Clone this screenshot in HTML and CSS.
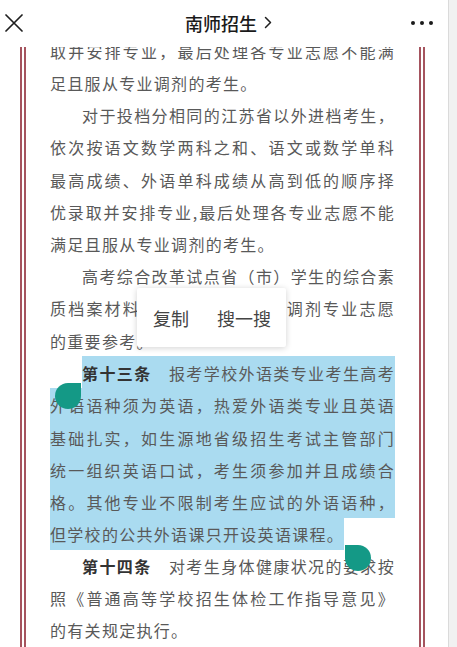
FILE: index.html
```html
<!DOCTYPE html>
<html lang="zh-CN">
<head>
<meta charset="utf-8">
<title>南师招生</title>
<link rel="stylesheet" href="styles.css">
</head>
<body>
<header class="topbar">
  <div class="bar-left">
    <svg class="icon-close" width="18" height="18" viewBox="0 0 18 18"><path d="M1 1L17 17M17 1L1 17" stroke="#1f1f1f" stroke-width="1.7" fill="none" stroke-linecap="round"/></svg>
  </div>
  <div class="bar-title"><span>南师招生</span><svg class="chev" width="8" height="13" viewBox="0 0 8 13"><path d="M1.5 1.5L6.5 6.5L1.5 11.5" stroke="#1f1f1f" stroke-width="1.5" fill="none" stroke-linecap="round" stroke-linejoin="round"/></svg></div>
  <div class="bar-right"><span class="dot"></span><span class="dot"></span><span class="dot"></span></div>
</header>
<div class="edge"></div>
<main class="article">
  <div class="frame">
    <p class="para cont">取并安排专业，最后处理各专业志愿不能满足且服从专业调剂的考生。</p>
    <p class="para">对于投档分相同的江苏省以外进档考生，依次按语文数学两科之和、语文或数学单科最高成绩、外语单科成绩从高到低的顺序择优录取并安排专业,最后处理各专业志愿不能满足且服从专业调剂的考生。</p>
    <p class="para">高考综合改革试点省（市）学生的综合素质档案材料将作为学校录取和调剂专业志愿的重要参考。</p>
    <p class="para"><span class="sel"><b>第十三条</b>　报考学校外语类专业考生高考外语语种须为英语，热爱外语类专业且英语基础扎实，如生源地省级招生考试主管部门统一组织英语口试，考生须参加并且成绩合格。其他专业不限制考生应试的外语语种，但学校的公共外语课只开设英语课程。</span></p>
    <p class="para"><b>第十四条</b>　对考生身体健康状况的要求按照《普通高等学校招生体检工作指导意见》的有关规定执行。</p>
    <div class="menu"><span>复制</span><span>搜一搜</span></div>
    <span class="handle handle-start"></span>
    <span class="handle handle-end"></span>
  </div>
</main>
</body>
</html>
```
FILE: styles.css
```css
* { box-sizing: border-box; }
html, body { margin: 0; padding: 0; }
body {
  width: 457px;
  height: 647px;
  overflow: hidden;
  background: #fff;
  font-family: "Noto Sans CJK SC", "Noto Sans", sans-serif;
}
.topbar {
  position: fixed;
  top: 0;
  left: 0;
  right: 0;
  height: 47px;
  background: #fff;
  z-index: 10;
  display: grid;
  grid-template-columns: 1fr auto 1fr;
  align-items: center;
  padding-bottom: 2px;
}
.bar-left { display: flex; align-items: center; padding-left: 5px; }
.icon-close { display: block; }
.bar-title {
  display: flex;
  align-items: center;
  font-size: 18px;
  font-weight: 500;
  color: #1a1a1a;
  line-height: 24px;
}
.chev { display: block; margin-left: 7px; }
.bar-right { display: flex; justify-content: flex-end; gap: 5px; padding-right: 24px; }
.dot { width: 4px; height: 4px; border-radius: 50%; background: #1a1a1a; }
.edge {
  position: fixed;
  top: 0;
  right: 0;
  bottom: 0;
  width: 9px;
  background: #f1f1f1;
  border-left: 1px solid #dadada;
  z-index: 20;
}
.article { padding-left: 20px; }
.frame {
  position: relative;
  width: 405px;
  border-left: 6px double #a5545e;
  border-right: 6px double #a5545e;
  padding: 34.7px 24px 60px 24px;
}
.para {
  margin: 0;
  font-size: 16px;
  line-height: 32.2px;
  letter-spacing: 1.3px;
  color: #595959;
  text-align: justify;
  text-indent: 32px;
}
.para.cont { text-indent: 0; }
.para b { font-weight: 700; color: #333; }
.sel { background: #aadbf0; padding: 4.5px 0; }
.menu {
  position: absolute;
  left: 111px;
  top: 288px;
  width: 149px;
  height: 59px;
  background: #fff;
  box-shadow: 0 1px 6px rgba(0, 0, 0, 0.18);
  border-radius: 2px;
  display: flex;
  align-items: center;
  gap: 28px;
  padding: 0 15px 0 16px;
  font-size: 18px;
  color: #444;
}
.handle { position: absolute; width: 26px; height: 26px; background: #149986; }
.handle-start { left: 29px; top: 383px; border-radius: 50% 0 50% 50%; }
.handle-end { left: 319px; top: 545px; border-radius: 0 50% 50% 50%; }
```
